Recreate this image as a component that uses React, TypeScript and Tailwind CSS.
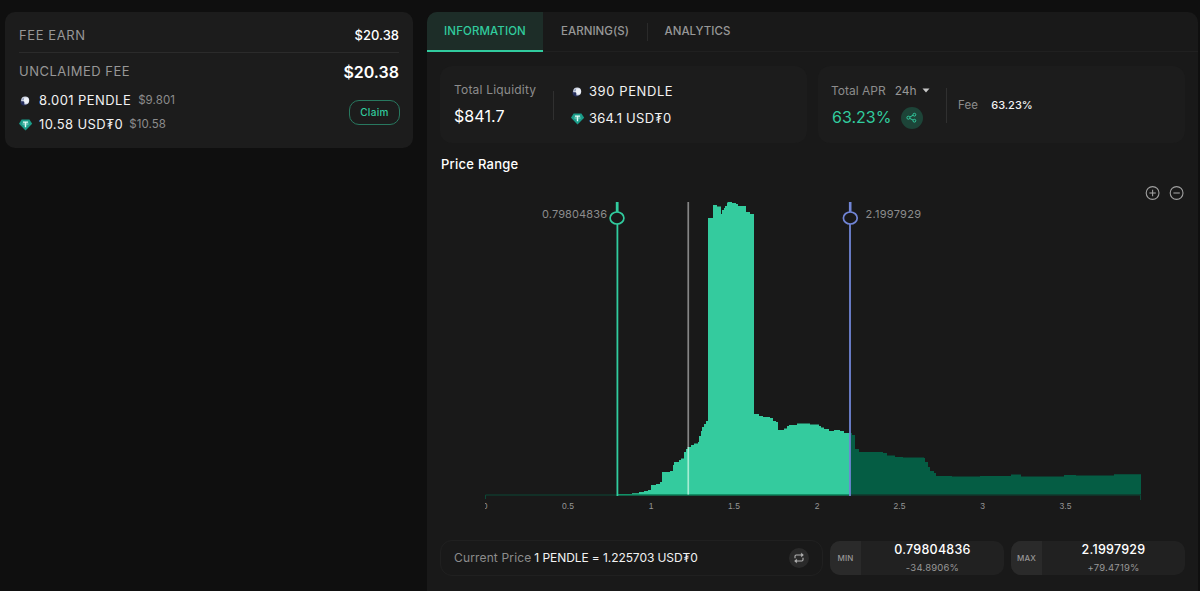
import { Fragment } from "react";
import clsx from "clsx";

type Point = [number, number];

// Each entry is [x where the step starts, y of its top]
const ACTIVE_STEPS: Point[] = [
  [617, 494], [632, 493.3], [639, 492], [644, 491], [648, 490], [651, 485], [656, 484], [660, 482],
  [662, 472], [670, 471], [673, 465], [674, 462], [679, 460], [681, 458.5], [684, 452], [686, 449],
  [689, 447], [691, 445], [694, 443.5], [698, 442], [699, 436], [701, 431], [702, 427], [704, 424],
  [706, 421], [708, 218], [713, 205], [717, 206.5], [721, 214], [722, 210], [724, 208], [725, 206],
  [727, 202.5], [728, 202], [732, 203], [736, 204], [738, 206], [746, 212], [750, 214], [754, 414],
  [759, 416], [763, 417], [770, 418], [773, 421], [776, 422], [778, 430], [784, 428.5], [787, 426],
  [789, 425], [797, 423.5], [810, 424.5], [819, 426], [821, 427.5], [824, 429], [829, 431],
  [834, 430], [840, 431], [844, 433], [850, 433],
];

const INACTIVE_STEPS: Point[] = [
  [850, 433], [852, 435], [855, 449], [859, 452], [883, 453], [887, 455.5], [895, 457], [903, 457.5],
  [924, 458], [925, 462], [928, 467], [930, 471], [934, 473], [936, 476], [952, 476.5], [980, 476],
  [1011, 474.5], [1021, 476.5], [1064, 475], [1076, 475.5], [1114, 474.3], [1141, 474.3],
];

const TICKS = [
  { x: 568, label: "0.5" },
  { x: 651, label: "1" },
  { x: 734, label: "1.5" },
  { x: 817, label: "2" },
  { x: 899.5, label: "2.5" },
  { x: 982.5, label: "3" },
  { x: 1065.5, label: "3.5" },
];

const BASELINE = 494.5;

function stepPath(steps: Point[]) {
  let d = `M${steps[0][0]} ${BASELINE}`;
  steps.forEach(([x, y]) => {
    d += `H${x}V${y}`;
  });
  return `${d}V${BASELINE}Z`;
}

function PendleIcon() {
  return (
    <svg viewBox="0 0 12 12" className="size-3 shrink-0">
      <circle cx="5.2" cy="6.8" r="3.8" fill="#20284f" />
      <circle cx="6.2" cy="5.4" r="4" fill="#d5dbe8" />
      <circle cx="7.2" cy="5.4" r="2.6" fill="#eef1f7" />
      <path d="M2.1 6.2h2.2a1 1 0 0 1 1 1v3.3a4 4 0 0 1-3.2-4.3z" fill="#252e5c" />
      <path d="M3 4.6a3.4 3.4 0 0 1 2-2v2.6H3z" fill="#9aa6c4" />
    </svg>
  );
}

function TetherIcon() {
  return (
    <svg viewBox="0 0 14 12" className="h-3 w-3.5 shrink-0">
      <path d="M2.6.6h7.8l2.8 4.2L6.5 11.4 0 4.8z" fill="#1a9c89" />
      <path d="M3.9 2.4h5.2v1.4H7.2v4.4H5.8V3.8H3.9z" fill="#e6fffa" />
      <ellipse cx="6.5" cy="5" rx="3" ry=".8" fill="none" stroke="#b9e8df" strokeWidth=".5" />
    </svg>
  );
}

function ShareIcon() {
  return (
    <svg viewBox="0 0 12 12" className="size-3" fill="none" stroke="#31cb9e" strokeWidth="1">
      <circle cx="2.4" cy="5.7" r="1.5" />
      <circle cx="8.4" cy="2.7" r="1.4" />
      <circle cx="8.4" cy="8.7" r="1.4" />
      <path d="M3.8 5l3.3-1.7M3.8 6.4l3.3 1.7" />
    </svg>
  );
}

function SwapIcon() {
  return (
    <svg viewBox="0 0 12 12" className="size-3" fill="none" stroke="#b4b4b4" strokeWidth="1.1">
      <path d="M10 3H3.2a1.2 1.2 0 0 0-1.2 1.2V6.2" />
      <path d="M8.4 1.2L10.4 3l-2 1.8z" fill="#b4b4b4" strokeWidth=".6" />
      <path d="M2 9h6.8a1.2 1.2 0 0 0 1.2-1.2V5.8" />
      <path d="M3.6 7.2L1.6 9l2 1.8z" fill="#b4b4b4" strokeWidth=".6" />
    </svg>
  );
}

function ZoomButton({ plus }: { plus?: boolean }) {
  return (
    <button className="size-4">
      <svg viewBox="0 0 16 16" className="size-4" fill="none" stroke="#a0a0a0" strokeWidth="1.1">
        <circle cx="7.6" cy="8" r="6.4" />
        <path d="M4.4 8h6.4" />
        {plus && <path d="M7.6 4.8v6.4" />}
      </svg>
    </button>
  );
}

function FeeCard() {
  return (
    <div className="h-[136px] w-[408px] shrink-0 rounded-[10px] bg-[#1c1c1c] px-3.5">
      <div className="flex h-[41px] items-center justify-between border-b border-[#2b2b2b] pt-[7px]">
        <span className="text-[13px] tracking-[0.6px] text-[#979797]">FEE EARN</span>
        <span className="text-[13px] font-medium text-white">$20.38</span>
      </div>
      <div className="flex h-[35px] items-center justify-between pt-[3px]">
        <span className="text-[13px] tracking-[0.5px] text-[#979797]">UNCLAIMED FEE</span>
        <span className="text-base leading-5 font-semibold text-white">$20.38</span>
      </div>
      <div className="flex items-center justify-between">
        <div>
          <div className="flex h-[25px] items-center">
            <PendleIcon />
            <span className="ml-2 text-[13px] tracking-[0.43px] text-[#f2f2f2]">8.001 PENDLE</span>
            <span className="ml-[7px] text-[11.5px] tracking-[0.1px] text-[#8c8c8c]">$9.801</span>
          </div>
          <div className="flex h-6 items-center">
            <TetherIcon />
            <span className="ml-1.5 text-[13px] tracking-[0.35px] text-[#f2f2f2]">10.58 USD₮0</span>
            <span className="ml-1.5 text-[11.5px] tracking-[0.1px] text-[#8c8c8c]">$10.58</span>
          </div>
        </div>
        <button className="-mr-px h-[25px] w-[51px] rounded-[10px] border border-[#28785f] text-[10px] font-medium tracking-[0.35px] text-[#31cb9e]">
          Claim
        </button>
      </div>
    </div>
  );
}

const TABS = [
  { label: "INFORMATION", width: "w-[116px]" },
  { label: "EARNING(S)", width: "w-[104px]" },
  { label: "ANALYTICS", width: "w-[99px]" },
];

function Tabs() {
  return (
    <div className="flex h-10 border-b border-[#202020]">
      {TABS.map((tab, i) => (
        <Fragment key={tab.label}>
          {i === 2 && <div className="mt-[11px] h-[18px] w-px bg-[#2a2a2a]" />}
          <button
            className={clsx(
              "h-10 pt-0.5 text-[11.5px] font-medium",
              tab.width,
              i === 0
                ? "rounded-tl-[10px] border-b-2 border-[#31cb9e] bg-[#1d2d28] tracking-[0.1px] text-[#31cb9e]"
                : "pb-0.5 tracking-[0.05px] text-[#979797]"
            )}
          >
            {tab.label}
          </button>
        </Fragment>
      ))}
    </div>
  );
}

function StatCards() {
  return (
    <div className="mt-3.5 flex gap-[11px]">
      <div className="flex h-[77px] w-[367px] rounded-xl bg-[#1c1c1c] pl-3.5">
        <div className="w-[99px] pt-[15px]">
          <p className="text-[12px] leading-[18px] tracking-[0.2px] text-[#8c8c8c]">Total Liquidity</p>
          <p className="mt-[5px] text-base leading-6 tracking-[0.1px] text-white">$841.7</p>
        </div>
        <div className="mt-[25px] h-[29px] w-px bg-[#303030]" />
        <div className="ml-[17px] pt-[12px] text-[13px] text-[#f2f2f2]">
          <div className="flex h-[27px] items-center gap-1.5 tracking-[0.58px]">
            <PendleIcon />
            390 PENDLE
          </div>
          <div className="flex h-[27px] items-center gap-1 tracking-[0.25px]">
            <TetherIcon />
            364.1 USD₮0
          </div>
        </div>
      </div>

      <div className="flex h-[77px] w-[367px] rounded-xl bg-[#1c1c1c] pl-3.5">
        <div className="w-[114px] pt-[15px]">
          <div className="-ml-px flex h-[19px] items-center text-[12px] text-[#8c8c8c]">
            <span>Total APR</span>
            <span className="ml-[9px] text-[#979797]">24h</span>
            <svg viewBox="0 0 8 5" className="ml-[5px] h-[5px] w-2">
              <path d="M.5.5h7L4 4.5z" fill="#c8c8c8" />
            </svg>
          </div>
          <div className="mt-[6px] flex items-center">
            <span className="text-base leading-[23px] text-[#31cb9e]">63.23%</span>
            <span className="ml-2.5 flex size-[22px] items-center justify-center rounded-full bg-[#1d4438]">
              <ShareIcon />
            </span>
          </div>
        </div>
        <div className="mt-[22px] h-[35px] w-px bg-[#303030]" />
        <div className="flex h-[77px] items-center gap-[13px] pt-0.5 pl-[11px] text-[11.5px]">
          <span className="tracking-[0.15px] text-[#8c8c8c]">Fee</span>
          <span className="text-[11px] font-medium text-[#f2f2f2]">63.23%</span>
        </div>
      </div>
    </div>
  );
}

function LiquidityChart() {
  return (
    <svg viewBox="440 201 745 319" className="block h-[319px] w-[745px] font-[Inter,sans-serif]">
      <path d={stepPath(ACTIVE_STEPS)} fill="#34cb9e" />
      <path d={stepPath(INACTIVE_STEPS)} fill="#055d44" />
      <path d="M485.5 499v-4h655v5" fill="none" stroke="#0d4837" />
      <rect x="617" y="494" width="233" height="1.5" fill="#129067" />

      <rect x="687.4" y="202" width="1.7" height="245" fill="#858585" />
      <rect x="687.4" y="447" width="1.7" height="47.5" fill="#a4ecd3" />

      <rect x="616.5" y="202" width="1.8" height="294" fill="#31cb9e" />
      <rect x="615.8" y="202" width="2.6" height="10" fill="#31cb9e" />
      <ellipse cx="617" cy="218" rx="6.9" ry="6" fill="#191919" stroke="#31cb9e" strokeWidth="1.7" />

      <rect x="849.1" y="202" width="1.8" height="294" fill="#7185d6" />
      <rect x="848.9" y="202" width="2.6" height="10" fill="#7185d6" />
      <ellipse cx="850.3" cy="218" rx="6.9" ry="6" fill="#191919" stroke="#7185d6" strokeWidth="1.7" />

      <g fontSize="11" fill="#8c8c8c">
        <text x="607" y="217.5" textAnchor="end" textLength="65">0.79804836</text>
        <text x="865.5" y="217.5" textLength="55.5">2.1997929</text>
      </g>

      <clipPath id="axis-start">
        <rect x="485" y="500" width="20" height="12" />
      </clipPath>
      <g fontSize="8.5" fill="#969696" textAnchor="middle" className="font-['Liberation_Sans',sans-serif]">
        <text x="485" y="509" clipPath="url(#axis-start)">0</text>
        {TICKS.map((tick) => (
          <text key={tick.label} x={tick.x} y="509">{tick.label}</text>
        ))}
      </g>
    </svg>
  );
}

function PriceBound({ label, value, change }: { label: string; value: string; change: string }) {
  return (
    <div className="flex h-[34px] w-[174px] overflow-hidden rounded-[10px] bg-[#212121]">
      <div className="flex w-[31px] items-center justify-center bg-[#2a2a2a] text-[8px] font-medium tracking-[0.1px] text-[#979797]">
        {label}
      </div>
      <div className="flex-1 text-center">
        <p className="text-[12.5px] leading-[18px] font-medium tracking-[0.25px] text-white">{value}</p>
        <p className="mt-px text-[9.5px] leading-4 tracking-[0.2px] text-[#979797]">{change}</p>
      </div>
    </div>
  );
}

export default function App() {
  return (
    <div className="flex h-[591px] w-[1200px] gap-3.5 overflow-hidden bg-[#0f0f0f] pt-3 pl-[5px] font-[Inter,sans-serif]">
      <FeeCard />

      <div className="h-[600px] w-[771px] shrink-0 rounded-t-[10px] bg-[#191919]">
        <Tabs />
        <div className="px-[13px]">
          <StatCards />

          <h2 className="mt-[11px] pl-px text-[13px] leading-5 font-medium tracking-[0.25px] text-white">Price Range</h2>
          <div className="mt-[11px] flex h-4 justify-end gap-2">
            <ZoomButton plus />
            <ZoomButton />
          </div>
          <LiquidityChart />

          <div className="mt-5 flex items-center gap-[7px]">
            <div className="flex h-9 w-[383px] items-center rounded-xl border border-[#202020] pl-[13px] text-[12px]">
              <span className="tracking-[0.15px] text-[#8c8c8c]">Current Price</span>
              <span className="ml-[3px] tracking-[-0.08px] text-[#f2f2f2]">1 PENDLE = 1.225703 USD₮0</span>
              <button className="mr-[13px] ml-auto flex size-5 items-center justify-center rounded-full bg-[#2a2a2a]">
                <SwapIcon />
              </button>
            </div>
            <PriceBound label="MIN" value="0.79804836" change="-34.8906%" />
            <PriceBound label="MAX" value="2.1997929" change="+79.4719%" />
          </div>
        </div>
      </div>
    </div>
  );
}
